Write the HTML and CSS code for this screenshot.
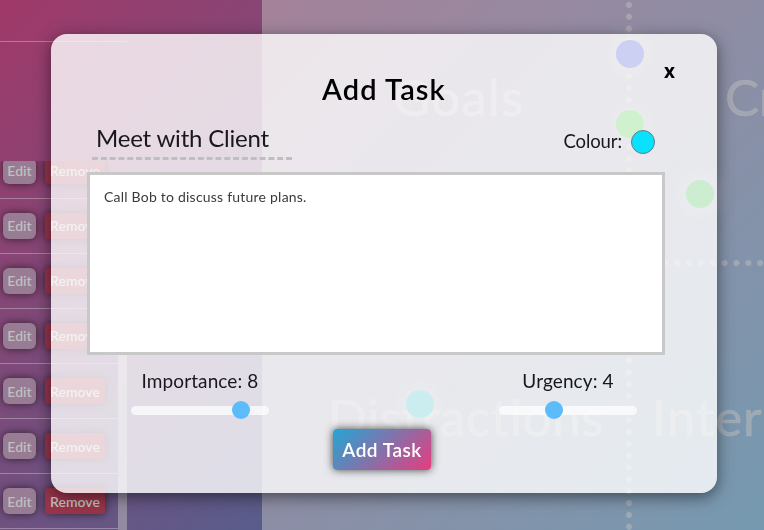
FILE: index.html
```html
<!DOCTYPE html>
<html lang="en">
<head>
<meta charset="utf-8">
<title>Add Task</title>
<link rel="stylesheet" href="styles.css">
</head>
<body>
<div class="app">
  <aside class="sidebar">
    <div class="sidebar-head"></div>
    <div class="sidebar-gap"></div>
    <div class="list">
      <div class="rows">
        <div class="row first"><span class="edit">Edit</span><span class="remove">Remove</span></div>
        <div class="row"><span class="edit">Edit</span><span class="remove">Remove</span></div>
        <div class="row"><span class="edit">Edit</span><span class="remove">Remove</span></div>
        <div class="row"><span class="edit">Edit</span><span class="remove">Remove</span></div>
        <div class="row low"><span class="edit">Edit</span><span class="remove">Remove</span></div>
        <div class="row low"><span class="edit">Edit</span><span class="remove">Remove</span></div>
        <div class="row low"><span class="edit">Edit</span><span class="remove">Remove</span></div>
      </div>
      <div class="scrollbar"><div class="scroll-thumb"></div></div>
    </div>
  </aside>
  <main class="matrix">
    <div class="quadrant"><span class="label goals">Goals</span></div>
    <div class="quadrant"><span class="label critical">Critical</span></div>
    <div class="quadrant"><span class="label distractions">Distractions</span></div>
    <div class="quadrant"><span class="label interruptions">Interruptions</span></div>
    <i class="axis vertical"></i>
    <i class="axis horizontal"></i>
    <i class="ball blue"></i>
    <i class="ball green"></i>
    <i class="ball mint"></i>
    <i class="ball cyan"></i>
  </main>
</div>
<section class="modal">
  <div class="top"><h1>Add Task</h1><span class="close">x</span></div>
  <div class="heading">
    <div class="name"><span>Meet with Client</span></div>
    <div class="colour"><span class="colour-label">Colour:</span><i class="swatch"></i></div>
  </div>
  <div class="notes"><span>Call Bob to discuss future plans.</span></div>
  <div class="sliders">
    <div class="slider"><span class="importance">Importance: 8</span><div class="track"><i class="thumb eight"></i></div></div>
    <div class="slider"><span class="urgency">Urgency: 4</span><div class="track"><i class="thumb four"></i></div></div>
  </div>
  <div class="submit"><span>Add Task</span></div>
</section>
</body>
</html>
```
FILE: styles.css
```css
* { box-sizing: border-box; }
html { overflow: hidden; }
body {
  margin: 0;
  width: 764px;
  height: 530px;
  overflow: hidden;
  font-family: Lato, "Open Sans", sans-serif;
  color: #18181c;
  background: linear-gradient(135deg, rgb(160,57,105), rgb(43,115,161));
}
.app { display: flex; height: 530px; overflow: hidden; }
.sidebar { width: 262px; flex: none; }
.sidebar-head { width: 127px; height: 42px; border-bottom: 1px solid rgba(200,190,200,.5); }
.sidebar-gap { height: 119px; }
.list { display: flex; width: 127px; height: 369px; overflow: hidden; }
.rows { width: 118px; }
.row {
  height: 55px;
  padding: 14px 0 0 3px;
  display: flex;
  align-items: flex-start;
  gap: 9px;
  border-bottom: 1px solid rgba(200,190,200,.5);
}
.first { margin-top: -17px; }
.edit, .remove {
  height: 26px;
  line-height: 26px;
  text-align: center;
  font-size: 14px;
  font-weight: 600;
  color: #bfbfbf;
  box-shadow: 0 0 8px rgba(0,0,0,.6);
  white-space: nowrap;
}
.low .edit, .low .remove { line-height: 28px; }
.edit { width: 33px; border-radius: 6px; background: #987c94; }
.remove { width: 60px; border-radius: 3px; background: #98344a; }
.scrollbar { width: 9px; padding-top: 110px; }
.scroll-thumb { height: 260px; background: rgba(191,191,191,.5); }

.matrix {
  position: relative;
  flex: none;
  width: 502px;
  overflow: hidden;
  display: grid;
  grid-template-columns: 367px 135px;
  grid-template-rows: 263px 267px;
  background: rgba(191,191,191,.5);
}
.quadrant { overflow: hidden; white-space: nowrap; }
.label {
  display: block;
  font-size: 51px;
  line-height: 60px;
  color: rgba(190,190,190,.5);
  -webkit-text-stroke: .7px rgba(190,190,190,.4);
}
.goals { margin: 67px 0 0 131px; letter-spacing: 1.2px; }
.critical { margin: 67px 0 0 96px; }
.distractions { margin: 124px 0 0 66px; letter-spacing: .6px; }
.interruptions { margin: 124px 0 0 23px; letter-spacing: 1px; }
.axis { position: absolute; background-image: radial-gradient(circle, rgba(190,190,190,.5) 2.7px, transparent 3.3px); background-size: 11.86px 11.86px; }
.vertical { left: 361px; top: -1px; width: 11.86px; height: 531px; }
.horizontal { left: 6px; top: 257.4px; width: 496px; height: 11.86px; }
.ball { position: absolute; width: 28px; height: 28px; border-radius: 50%; box-shadow: 0 0 20px rgba(210,210,210,.6); }
.blue { left: 353.6px; top: 40.3px; background: rgb(0,26,195); }
.green { left: 353.6px; top: 110px; background: rgb(20,185,5); }
.mint { left: 423.6px; top: 180px; background: rgb(0,165,20); }
.cyan { left: 144px; top: 389.6px; background: rgb(0,165,180); }

.modal {
  position: fixed;
  left: 51px;
  top: 34px;
  width: 666px;
  height: 459px;
  padding: 0 52px 0 36px;
  border-radius: 16px;
  background: rgba(255,255,255,.8);
  box-shadow: 0 4px 16px rgba(0,0,0,.5);
  white-space: nowrap;
}
.top { display: flex; height: 84px; position: relative; }
h1 { margin: 38px 0 0 235px; font-size: 29px; line-height: 34px; font-weight: 600; letter-spacing: 1.1px; color: #000; }
.close { position: absolute; left: 577px; top: 26px; font: 700 19px/22px "Noto Sans", sans-serif; color: #000; }
.heading { display: flex; justify-content: space-between; height: 54px; }
.name { width: 200px; height: 42px; margin-left: 5px; padding: 4px 0 0 4px; font-size: 24px; line-height: 32px; letter-spacing: -.2px; border-bottom: 3px dashed #bfbfbf; }
.colour { display: flex; align-items: center; gap: 9px; height: 48px; margin-right: 10px; font-size: 18.5px; line-height: 24px; }
.colour-label { margin-top: -2px; letter-spacing: -.1px; }
.swatch { width: 24px; height: 24px; border-radius: 50%; border: 1px solid #687b86; background: #08e2ff; }
.notes { width: 578px; height: 183px; border: 3px solid #c8c8c8; background: #fff; padding: 12px 14px; font-size: 14px; line-height: 20px; letter-spacing: .22px; color: #3a3a3a; }
.sliders { display: flex; gap: 230px; margin: 13px 0 0 44px; }
.slider { width: 138px; text-align: center; font-size: 19px; line-height: 26px; letter-spacing: .1px; }
.slider > span { display: block; }
.track { height: 9px; margin-top: 12px; border-radius: 5px; background: rgba(255,255,255,.7); }
.thumb { display: block; position: relative; top: -5px; width: 18px; height: 18px; border-radius: 50%; background: #5abcfa; }
.eight { left: 101px; }
.four { left: 46px; }
.submit {
  width: 98px; height: 41px; margin: 14px 0 0 246px;
  border-radius: 4px;
  background: linear-gradient(135deg, #23a6d5, #e73c7e);
  box-shadow: 0 0 8px rgba(0,0,0,.7);
  color: #fff; font-size: 19px; line-height: 41px; font-weight: 600; letter-spacing: .5px; text-align: center;
}
```
